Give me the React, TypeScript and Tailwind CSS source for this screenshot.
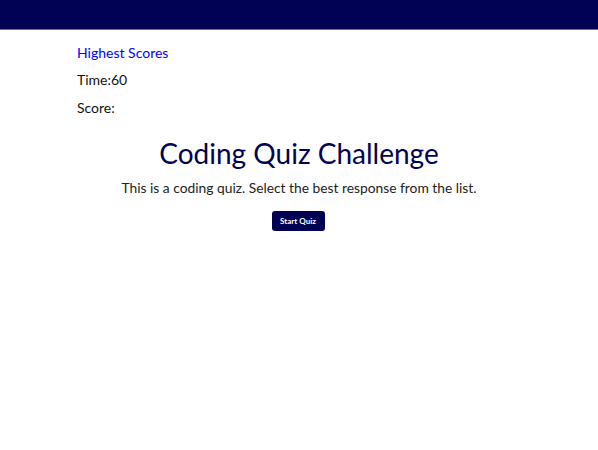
import React from "react";

const App = () => {
  return (
    <div className="min-h-screen bg-white" style={{ fontFamily: "Lato, 'Open Sans', sans-serif" }}>
      <header className="h-[30px] bg-[#020254] border-b border-[#6b6b9a]" />
      <div className="px-[77px] pt-[14px]">
        <a href="#" className="block text-[14px] leading-[18px] text-[#0000ff]">
          Highest Scores
        </a>
        <div className="mt-[9px] text-[14px] leading-[18px] text-[#111]">Time:60</div>
        <div className="mt-[10px] text-[14px] leading-[18px] text-[#111]">Score:</div>
      </div>
      <main className="flex flex-col items-center mt-[18px]">
        <h1 className="text-[28px] leading-[36px] text-[#020254]">Coding Quiz Challenge</h1>
        <p className="mt-[8px] text-[13.8px] leading-[18px] text-[#222]">
          This is a coding quiz. Select the best response from the list.
        </p>
        <button className="mt-[14px] ml-[-2px] h-[20px] w-[53px] rounded-[3px] bg-[#020254] text-white text-[8px] font-bold">
          Start Quiz
        </button>
      </main>
    </div>
  );
};

export default App;
